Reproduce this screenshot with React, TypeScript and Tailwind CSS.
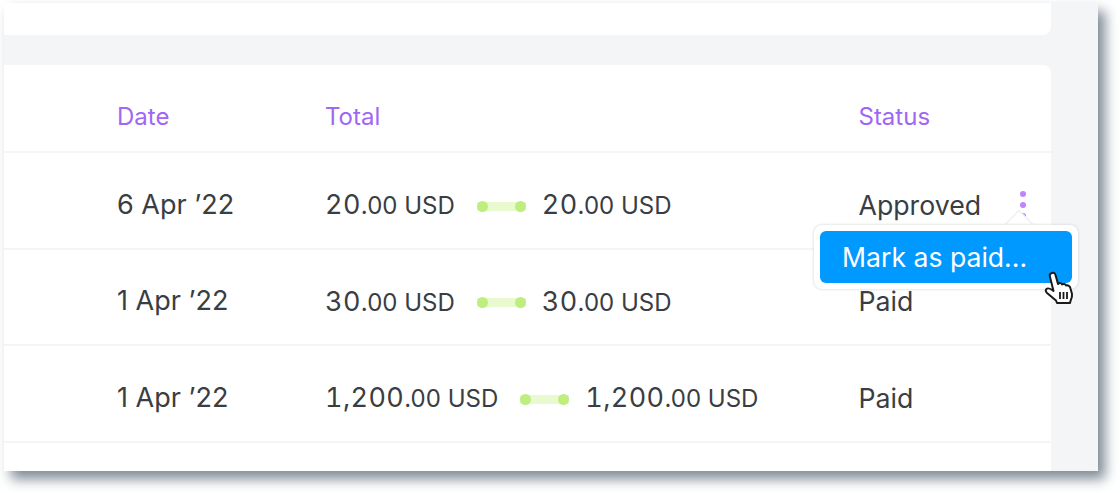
const rows = [
  { date: "6 Apr ’22", amount: "20", status: "Approved" },
  { date: "1 Apr ’22", amount: "30", status: "Paid" },
  { date: "1 Apr ’22", amount: "1,200", status: "Paid" },
];

function Money({ amount }: { amount: string }): JSX.Element {
  return (
    <span className="whitespace-nowrap text-[#3a3d42]">
      <span className="text-[27px] tracking-[0.4px] tabular-nums">{amount}</span>
      <span className="text-[24px]">.00 USD</span>
    </span>
  );
}

function Connector(): JSX.Element {
  return (
    <div className="ml-[22px] mr-[16px] mt-[3px] flex h-[11px] w-[49px] items-center justify-between bg-[linear-gradient(#fff_0,#fff_1px,#e9fad0_1px,#e9fad0_10px,#fff_10px)]">
      <span className="h-[11px] w-[11px] rounded-full bg-[#bdee7e]" />
      <span className="h-[11px] w-[11px] rounded-full bg-[#bdee7e]" />
    </div>
  );
}

function Hand(): JSX.Element {
  return (
    <svg width="30" height="36" viewBox="0 0 30 36" className="absolute left-[1040px] top-[268px]">
      <path
        d="M7 2.500C9 1 11 2 11.500 4L14 13C15.500 11.500 17.500 12 18 13.500C19.500 12.500 21.500 13 22 14.500C24 14 26 15 26.500 17.500L28 23C28.500 26 27.500 28 26.500 30L26 32H13L12 29.500L3 22C1 20 1.500 18 3.500 17.500C5 17 7 18 9.500 20L6 6C5.500 4.500 6 3 7 2.500Z"
        fill="#fff"
        stroke="#1a1a1a"
        strokeWidth="2"
        strokeLinejoin="round"
      />
      <path d="M16 21v7M19.500 21v7M23 21v7" stroke="#1a1a1a" strokeWidth="1.800" />
    </svg>
  );
}

export default function App(): JSX.Element {
  return (
    <div className="h-[493px] w-[1120px] overflow-hidden bg-white pl-[4px] pt-[3px] font-['Inter',sans-serif]">
      <div className="relative h-[468px] w-[1094px] bg-[#f4f5f7] pr-[47px] shadow-[7px_8px_12px_0_#7f8a96]">
        <div className="h-[32px] rounded-br-[8px] bg-white" />
        <div className="mt-[30px] h-[406px] rounded-tr-[8px] bg-white">
          <div className="flex h-[88px] items-end border-b-2 border-[#f4f5f7] pb-[19px] pl-[113px] text-[24px] leading-[30px] text-[#a066f5]">
            <span className="w-[208px]">Date</span>
            <span className="w-[533.500px]">Total</span>
            <span>Status</span>
          </div>
          {rows.map((r) => (
            <div
              key={r.amount}
              className="flex h-[96.600px] items-center border-b-2 border-[#f4f5f7] pl-[113px] pt-[9px] text-[26.700px] text-[#3a3d42]"
            >
              <span className="w-[208px] whitespace-nowrap text-[27px]">{r.date}</span>
              <div className="flex w-[533.500px] items-center">
                <Money amount={r.amount} />
                <Connector />
                <Money amount={r.amount} />
              </div>
              <span>{r.status}</span>
            </div>
          ))}
        </div>
        <div className="absolute left-[1016px] top-[188px] flex flex-col gap-[5px]">
          <span className="h-[6px] w-[6px] rounded-full bg-[#c084fc]" />
          <span className="h-[6px] w-[6px] rounded-full bg-[#c084fc]" />
          <span className="h-[6px] w-[6px] rounded-full bg-[#c084fc]" />
        </div>
        <div className="absolute left-[1005px] top-[211px] h-[20px] w-[20px] rotate-45 border-l border-t border-[#e8eaed] bg-white" />
        <div className="absolute left-[810px] top-[222px] rounded-[8px] bg-white p-[6px] shadow-[0_0_3px_#c9ced4]">
          <div className="flex h-[52px] w-[252px] items-center rounded-[6px] bg-[#0099ff] pl-[22px] pt-[2px] text-[26.600px] text-white">
            Mark as paid...
          </div>
        </div>
        <Hand />
      </div>
    </div>
  );
}
